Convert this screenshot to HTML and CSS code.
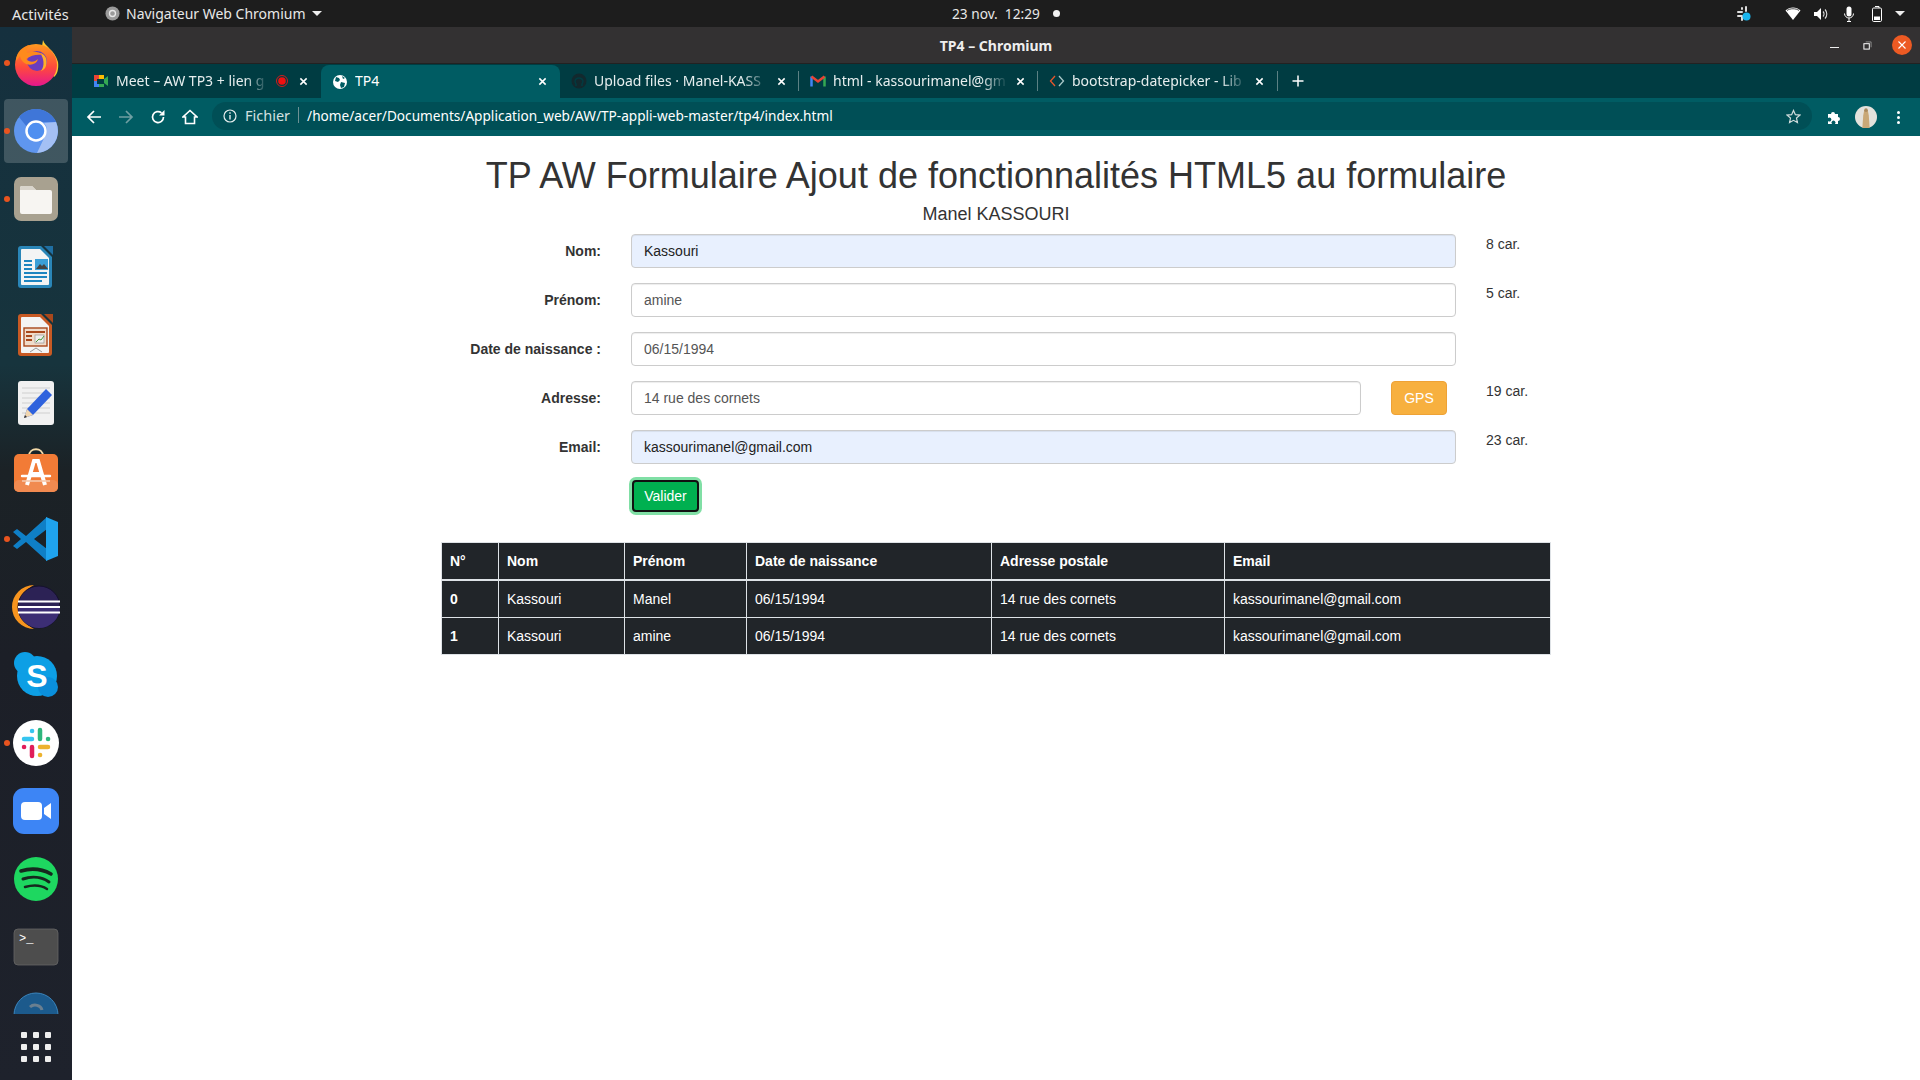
FILE: index.html
```html
<!DOCTYPE html>
<html lang="fr">
<head>
    <meta charset="UTF-8">
    <title>TP4</title>
    <link rel="stylesheet" href="styles.css">
</head>
<body>
    <!-- barre du haut -->
    <header class="topbar">
        <div class="top-left">
            <span class="activities">Activités</span>
            <span class="app-menu">
                <svg class="app-icon" viewBox="0 0 16 16"><circle cx="8" cy="8" r="7.5" fill="#9a9a9a"/><circle cx="8" cy="8" r="3.2" fill="none" stroke="#e8e8e8" stroke-width="1.4"/></svg>
                Navigateur Web Chromium
                <i class="caret"></i>
            </span>
        </div>
        <div class="clock">23 nov.&nbsp; 12:29<i class="clock-dot"></i></div>
        <div class="status">
            <svg class="st-slack" viewBox="0 0 16 16"><g stroke="#ddd" stroke-width="2" stroke-linecap="round"><path d="M2 6h4M6 2v1M10 1v4M2 10h4M6 10v4"/></g><circle cx="10.5" cy="10.5" r="4" fill="#19b5ee"/></svg>
            <svg class="st-wifi" viewBox="0 0 16 16"><path d="M0.5 4.5C4.5 0.5 11.5 0.5 15.5 4.5L8 14Z" fill="#fff"/><path d="M2 4.5C5 2.2 11 2.2 14 4.5" fill="none" stroke="#1d1d1d" stroke-width="0.8"/></svg>
            <svg class="st-vol" viewBox="0 0 16 16"><path d="M1 6h3l4-4v12l-4-4H1Z" fill="#fff"/><path d="M10 5.5a3.5 3.5 0 0 1 0 5M12 3.5a6.5 6.5 0 0 1 0 9" fill="none" stroke="#ddd" stroke-width="1.1"/></svg>
            <svg class="st-mic" viewBox="0 0 16 16"><rect x="5.5" y="0.5" width="5" height="10" rx="2.5" fill="#fff"/><path d="M3.5 7.5a4.5 4.5 0 0 0 9 0M8 12v3.5M6 15.5h4" fill="none" stroke="#fff" stroke-width="1"/></svg>
            <svg class="st-bat" viewBox="0 0 16 16"><path d="M6 0.5h4v1.5" fill="none" stroke="#fff"/><rect x="3.5" y="2" width="9" height="13.5" rx="1.2" fill="none" stroke="#fff"/><rect x="5" y="10.5" width="6" height="3.5" fill="#fff"/></svg>
            <i class="caret"></i>
        </div>
    </header>

    <div class="desktop">
        <!-- dock -->
        <nav class="dock">
            <div class="dock-list">
                <div class="dock-item running">
                    <svg viewBox="0 0 48 48"><defs><linearGradient id="ffBody" x1="0" y1="0" x2="0" y2="1"><stop offset="0" stop-color="#ff9a1f"/><stop offset=".55" stop-color="#ff4a3c"/><stop offset="1" stop-color="#e5178d"/></linearGradient></defs>
                        <path d="M31 1C33 8 43 11 46 23C47 30 45 36 42 38L28 20Z" fill="#ffc82e"/>
                        <circle cx="24" cy="26" r="21" fill="url(#ffBody)"/>
                        <circle cx="25" cy="22" r="10" fill="#6b3dbd"/>
                        <path d="M28 14C33 15 36 20 34 27C33 30 31 31 29 32C33 27 32 19 28 14Z" fill="#ffb028"/>
                        <path d="M4 22C4 13 11 7 18 6C14 10 14 13 16 14C20 12 27 12 31 16C25 15 19 16 14 20C18 24 23 23 26 20C24 28 10 28 8 17Z" fill="#ff8a1c"/>
                    </svg>
                </div>
                <div class="dock-item running active">
                    <svg viewBox="0 0 48 48"><circle cx="24" cy="24" r="22" fill="#5f96ef"/>
                        <path d="M7 10A22 22 0 0 1 44 15H24A10 10 0 0 0 15 20Z" fill="#3f76d8"/>
                        <path d="M44 15A22 22 0 0 1 25 46L33 29A10 10 0 0 0 32 16Z" fill="#a4c0f4"/>
                        <circle cx="24" cy="24" r="9.5" fill="#4f8ff0" stroke="#fff" stroke-width="2.5"/></svg>
                </div>
                <div class="dock-item running">
                    <svg viewBox="0 0 48 48"><rect x="2" y="2" width="44" height="44" rx="7" fill="#a8a190"/>
                        <path d="M8 13a2 2 0 0 1 2-2h10l4 4h14a2 2 0 0 1 2 2v20a2 2 0 0 1-2 2H10a2 2 0 0 1-2-2Z" fill="#f7f5f2"/>
                        <path d="M8 13a2 2 0 0 1 2-2h10l4 4H8Z" fill="#d9d5cc"/></svg>
                </div>
                <div class="dock-item">
                    <svg viewBox="0 0 48 48"><path d="M9 3h20l11 11v28a3 3 0 0 1-3 3H9a3 3 0 0 1-3-3V6a3 3 0 0 1 3-3Z" fill="#2a86b8"/>
                        <path d="M10 6h18l9 9v26a1 1 0 0 1-1 1H10a1 1 0 0 1-1-1V7a1 1 0 0 1 1-1Z" fill="#f4f4f4"/>
                        <path d="M32 3h9v9Z" fill="#1f6fa3"/>
                        <path d="M12 18h8M12 22h8M12 26h8M12 30h23M12 34h23M12 38h18" stroke="#1e85c0" stroke-width="2"/>
                        <rect x="23" y="16" width="13" height="11" fill="#3a9fd8"/><path d="M24 26l4-5 2 2 2-2 4 5Z" fill="#444"/></svg>
                </div>
                <div class="dock-item">
                    <svg viewBox="0 0 48 48"><path d="M9 3h20l11 11v28a3 3 0 0 1-3 3H9a3 3 0 0 1-3-3V6a3 3 0 0 1 3-3Z" fill="#c85a24"/>
                        <path d="M10 6h18l9 9v26a1 1 0 0 1-1 1H10a1 1 0 0 1-1-1V7a1 1 0 0 1 1-1Z" fill="#f4f4f4"/>
                        <path d="M32 3h9v9Z" fill="#a8481c"/>
                        <rect x="12" y="17" width="23" height="18" fill="#f0dccb" stroke="#a8481c" stroke-width="1.4"/>
                        <path d="M14 21h19M14 25h6M14 29h6" stroke="#a8481c" stroke-width="2"/>
                        <rect x="23" y="24" width="9" height="8" fill="#eee" stroke="#888" stroke-width=".6"/><path d="M24 31l3-3 2 1 3-4" fill="none" stroke="#4a9a3a"/>
                        <path d="M18 41l6-4 6 4" fill="none" stroke="#999"/></svg>
                </div>
                <div class="dock-item">
                    <svg viewBox="0 0 48 48"><rect x="6" y="2" width="36" height="44" rx="3" fill="#f1f1f1"/>
                        <path d="M10 9h28M10 14h28M10 19h28M10 24h28M10 29h28M10 34h28" stroke="#cfcfcf"/>
                        <path d="M34 10l6 6-19 20-9 3 3-9Z" fill="#2f62dd"/><path d="M15 30l6 6-9 3Z" fill="#f1d6b0"/><path d="M12 39l1-3 2 2Z" fill="#333"/></svg>
                </div>
                <div class="dock-item">
                    <svg viewBox="0 0 48 48"><path d="M17 9c0-9 14-9 14 0" fill="none" stroke="#f3d9a8" stroke-width="1.8"/>
                        <rect x="2" y="7" width="44" height="38" rx="5" fill="#f27b36"/><rect x="2" y="33" width="44" height="12" rx="5" fill="#f18a50"/>
                        <path d="M15 38L22 14h4l7 24M18 27h12" fill="none" stroke="#fff" stroke-width="4"/><path d="M10 29h28" stroke="#fff" stroke-width="2.4" stroke-linecap="round"/><path d="M10 34h28" stroke="#f7c6a8" stroke-width="1.6"/></svg>
                </div>
                <div class="dock-item running">
                    <svg viewBox="0 0 48 48"><path d="M35 2L14 21 5 14 1 17 9 24 1 31 5 34 14 27 35 46ZM35 14V34L22 24Z" fill="#0f7fc6" fill-rule="evenodd"/>
                        <path d="M34 2l12 5v34l-12 5Z" fill="#1fa3ee"/><path d="M34 14L22 24 34 34Z" fill="none"/></svg>
                </div>
                <div class="dock-item">
                    <svg viewBox="0 0 48 48"><path d="M22 2A22 22 0 0 0 22 46C14 42 8 34 8 24S14 6 22 2Z" fill="#f7941e"/>
                        <circle cx="27" cy="24" r="21" fill="#2c2255" stroke="#15102e"/>
                        <path d="M6 24a21 21 0 0 0 42 0Z" fill="#3c2e74"/>
                        <path d="M6 18.500h42M6 24h42M6 29.500h42" stroke="#fff" stroke-width="2.200"/></svg>
                </div>
                <div class="dock-item">
                    <svg viewBox="0 0 48 48"><circle cx="25" cy="25" r="20" fill="#0d9fe5"/><circle cx="13" cy="12" r="11" fill="#0d9fe5"/><circle cx="36" cy="36" r="10" fill="#0a8fdc"/>
                        <text class="skype-s" x="25" y="36" text-anchor="middle">S</text></svg>
                </div>
                <div class="dock-item running">
                    <svg viewBox="0 0 48 48"><circle cx="24" cy="24" r="23" fill="#fff"/>
                        <g fill="none" stroke-width="4.500" stroke-linecap="round"><path d="M12 20h8M20 12h.1" stroke="#36c5f0"/><path d="M28 11v9M36 20h.1" stroke="#2eb67d"/><path d="M28 28h8M28 36h.1" stroke="#ecb22e"/><path d="M20 28v9M12 28h.1" stroke="#e01e5a"/></g></svg>
                </div>
                <div class="dock-item">
                    <svg viewBox="0 0 48 48"><rect x="1" y="1" width="46" height="46" rx="11" fill="#3d85f5"/>
                        <rect x="9" y="15" width="21" height="18" rx="4" fill="#fff"/><path d="M32 21l7-5v16l-7-5Z" fill="#fff"/></svg>
                </div>
                <div class="dock-item">
                    <svg viewBox="0 0 48 48"><circle cx="24" cy="24" r="22" fill="#1ed760"/>
                        <g fill="none" stroke="#16281e" stroke-linecap="round"><path d="M9 16c10-3 21-2 30 3" stroke-width="3.600"/><path d="M11 24c9-3 19-2 26 3" stroke-width="3"/><path d="M13 32c7-2 16-2 22 2" stroke-width="2.500"/></g></svg>
                </div>
                <div class="dock-item">
                    <svg viewBox="0 0 48 48"><rect x="2" y="6" width="44" height="36" rx="4" fill="#4d4d4d" stroke="#666" stroke-width=".8"/>
                        <text class="term-text" x="7" y="19">&gt;_</text></svg>
                </div>
                <div class="dock-item">
                    <svg viewBox="0 0 48 48"><circle cx="24" cy="24" r="22" fill="#1c5a8c"/><path d="M2 24a22 22 0 0 1 44 0" fill="none" stroke="#3a85bd" stroke-width="1"/><path d="M18 16a7 6 0 0 1 12 3" fill="none" stroke="#6a7f90" stroke-width="3"/></svg>
                </div>
            </div>
            <div class="dock-grid">
                <i></i><i></i><i></i><i></i><i></i><i></i><i></i><i></i><i></i>
            </div>
        </nav>

        <div class="window">
            <div class="titlebar">
                <span class="win-title">TP4 – Chromium</span>
                <div class="win-btns">
                    <span class="win-min"></span>
                    <svg class="win-max" viewBox="0 0 10 10"><rect x="1" y="3" width="6" height="6" fill="none" stroke="#fff" stroke-width="1.100"/><path d="M3 1h6v6" fill="none" stroke="#aaa" stroke-width=".8"/></svg>
                    <span class="win-close"><svg viewBox="0 0 10 10"><path d="M1.500 1.500l7 7M8.500 1.500l-7 7" stroke="#fff" stroke-width="1.100"/></svg></span>
                </div>
            </div>

            <div class="tabstrip">
                <div class="tab">
                    <svg class="tab-icon" viewBox="0 0 16 16"><rect x="1" y="2" width="5" height="6" fill="#ea4335"/><rect x="6" y="2" width="5" height="4" fill="#fbbc04"/><rect x="1" y="8" width="5" height="6" fill="#4285f4"/><rect x="6" y="11" width="5" height="3" fill="#34a853"/><path d="M11 6l4-3v10l-4-3Z" fill="#34a853"/><rect x="4" y="6" width="6" height="5" fill="#003c42"/></svg>
                    <span class="tab-title">Meet – AW TP3 + lien g</span>
                    <svg class="tab-rec" viewBox="0 0 12 12"><circle cx="6" cy="6" r="5.500" fill="none" stroke="#e81a1a" stroke-width=".9"/><circle cx="6" cy="6" r="3.800" fill="#f01010"/></svg>
                    <svg class="tab-x" viewBox="0 0 10 10"><path d="M1.500 1.500l7 7M8.500 1.500l-7 7"/></svg>
                </div>
                <div class="tab tab-active">
                    <svg class="tab-icon" viewBox="0 0 16 16"><circle cx="8" cy="8" r="7" fill="#fff"/><path d="M4 3l3 1 1 2-2 2-3-1ZM9 8l4 1-1 4-3 1-1-3ZM10 2l3 2-2 1Z" fill="#005c63"/></svg>
                    <span class="tab-title">TP4</span>
                    <svg class="tab-x" viewBox="0 0 10 10"><path d="M1.500 1.500l7 7M8.500 1.500l-7 7"/></svg>
                </div>
                <div class="tab">
                    <svg class="tab-icon" viewBox="0 0 16 16"><circle cx="8" cy="8" r="7.500" fill="#1b1f23" opacity=".65"/><path d="M5 13v-2C3 9 4 5 8 5s5 4 3 6v2" fill="none" stroke="#003c42" stroke-width="1.500"/></svg>
                    <span class="tab-title">Upload files · Manel-KASS</span>
                    <svg class="tab-x" viewBox="0 0 10 10"><path d="M1.500 1.500l7 7M8.500 1.500l-7 7"/></svg>
                </div>
                <div class="tab tab-sep">
                    <svg class="tab-icon" viewBox="0 0 16 16"><path d="M1.500 3.500v10" stroke="#4285f4" stroke-width="2.500"/><path d="M14.500 3.500v10" stroke="#34a853" stroke-width="2.500"/><path d="M1.500 3.500L8 8.500l6.500-5" fill="none" stroke="#ea4335" stroke-width="2.500"/></svg>
                    <span class="tab-title">html - kassourimanel@gm</span>
                    <svg class="tab-x" viewBox="0 0 10 10"><path d="M1.500 1.500l7 7M8.500 1.500l-7 7"/></svg>
                </div>
                <div class="tab tab-sep">
                    <svg class="tab-icon" viewBox="0 0 16 16"><path d="M6 3L1.500 8 6 13" fill="none" stroke="#e9572b" stroke-width="1.300"/><path d="M10 3l4.500 5-4.500 5" fill="none" stroke="#a9c9c9" stroke-width="1.300"/></svg>
                    <span class="tab-title">bootstrap-datepicker - Lib</span>
                    <svg class="tab-x" viewBox="0 0 10 10"><path d="M1.500 1.500l7 7M8.500 1.500l-7 7"/></svg>
                </div>
                <div class="tab-new"><svg viewBox="0 0 12 12"><path d="M6 0.500v11M0.500 6h11" stroke="#fff" stroke-width="1.500"/></svg></div>
            </div>

            <div class="toolbar">
                <svg class="tb-btn" viewBox="0 0 16 16"><path d="M15 8H2M8 2L2 8l6 6" fill="none" stroke="#fff" stroke-width="1.700"/></svg>
                <svg class="tb-btn" viewBox="0 0 16 16"><path d="M1 8h13M8 2l6 6-6 6" fill="none" stroke="#6f9fa3" stroke-width="1.700"/></svg>
                <svg class="tb-btn" viewBox="0 0 16 16"><path d="M13.500 8A5.500 5.500 0 1 1 11.500 3.800" fill="none" stroke="#fff" stroke-width="1.700"/><path d="M14.500 1v5.500H9Z" fill="#fff"/></svg>
                <svg class="tb-btn" viewBox="0 0 16 16"><path d="M8 1.500L1 8h2.500v6.500h9V8H15Z" fill="none" stroke="#fff" stroke-width="1.600"/></svg>
                <div class="omnibox">
                    <svg class="omni-info" viewBox="0 0 14 14"><circle cx="7" cy="7" r="6" fill="none" stroke="#e6eeee" stroke-width="1.200"/><path d="M7 6v4.500M7 3.300v1.500" stroke="#e6eeee" stroke-width="1.400"/></svg>
                    <span class="omni-scheme">Fichier</span>
                    <span class="omni-url">/home/acer/Documents/Application_web/AW/TP-appli-web-master/tp4/index.html</span>
                    <svg class="omni-star" viewBox="0 0 16 16"><path d="M8 1.500l2 4.500 4.800.5-3.600 3.200 1 4.800L8 12.100l-4.200 2.400 1-4.800L1.200 6.500 6 6Z" fill="none" stroke="#cfdcdc" stroke-width="1.300"/></svg>
                </div>
                <svg class="tb-puzzle" viewBox="0 0 16 16"><path d="M2 5h3a2 2 0 1 1 4 0h3v3a2 2 0 1 1 0 4v3H9a2 2 0 1 0-3 0H2v-3a2 2 0 1 0 0-3Z" fill="#fff"/></svg>
                <svg class="tb-avatar" viewBox="0 0 24 24"><circle cx="12" cy="12" r="12" fill="#e4e2dc"/><path d="M10 5h4l1 5 1 14H8l1-14Z" fill="#c9a877"/><circle cx="12" cy="4.500" r="2" fill="#a98a5f"/></svg>
                <div class="tb-menu"><i></i><i></i><i></i></div>
            </div>

            <main class="page">
                <div class="container">
                    <h1 class="page-title">TP AW Formulaire Ajout de fonctionnalités HTML5 au formulaire</h1>
                    <p class="page-sub">Manel KASSOURI</p>

                    <form class="form">
                        <div class="form-row">
                            <label class="form-label">Nom:</label>
                            <div class="form-field"><input class="input input-auto" type="text" value="Kassouri"></div>
                            <span class="char-count">8 car.</span>
                        </div>
                        <div class="form-row">
                            <label class="form-label">Prénom:</label>
                            <div class="form-field"><input class="input" type="text" value="amine"></div>
                            <span class="char-count">5 car.</span>
                        </div>
                        <div class="form-row">
                            <label class="form-label">Date de naissance :</label>
                            <div class="form-field"><input class="input" type="text" value="06/15/1994"></div>
                            <span class="char-count"></span>
                        </div>
                        <div class="form-row">
                            <label class="form-label">Adresse:</label>
                            <div class="form-field field-gps">
                                <input class="input" type="text" value="14 rue des cornets">
                                <button class="btn-gps" type="button">GPS</button>
                            </div>
                            <span class="char-count">19 car.</span>
                        </div>
                        <div class="form-row">
                            <label class="form-label">Email:</label>
                            <div class="form-field"><input class="input input-auto" type="text" value="kassourimanel@gmail.com"></div>
                            <span class="char-count">23 car.</span>
                        </div>
                        <div class="form-row">
                            <span class="form-label"></span>
                            <div class="form-field"><button class="btn-valider" type="button">Valider</button></div>
                        </div>
                    </form>

                    <table class="table">
                        <thead>
                            <tr>
                                <th class="col-num">N°</th>
                                <th class="col-nom">Nom</th>
                                <th class="col-prenom">Prénom</th>
                                <th class="col-date">Date de naissance</th>
                                <th class="col-adr">Adresse postale</th>
                                <th>Email</th>
                            </tr>
                        </thead>
                        <tbody>
                            <tr>
                                <th>0</th>
                                <td>Kassouri</td>
                                <td>Manel</td>
                                <td>06/15/1994</td>
                                <td>14 rue des cornets</td>
                                <td>kassourimanel@gmail.com</td>
                            </tr>
                            <tr>
                                <th>1</th>
                                <td>Kassouri</td>
                                <td>amine</td>
                                <td>06/15/1994</td>
                                <td>14 rue des cornets</td>
                                <td>kassourimanel@gmail.com</td>
                            </tr>
                        </tbody>
                    </table>
                </div>
            </main>
        </div>
    </div>
</body>
</html>
```

FILE: styles.css
```css
*{
    box-sizing: border-box;
    padding: 0;
    margin: 0;
}
html,body{
    height: 100%;
    overflow: hidden;
}
body{
    display: flex;
    flex-direction: column;
    font-family: "Liberation Sans", Arial, sans-serif;
    font-size: 14px;
    color: #333;
    background-color: #fff;
}

/* barre du haut */
.topbar{
    height: 27px;
    flex: none;
    display: flex;
    align-items: center;
    background-color: #1d1d1d;
    color: #e8e8e8;
    font-family: "Noto Sans", sans-serif;
    font-size: 14px;
}
.top-left{
    width: 952px;
    display: flex;
    align-items: center;
    padding-left: 12px;
}
.activities{
    width: 93px;
    font-size: 14.500px;
}
.app-menu{
    display: flex;
    align-items: center;
}
.app-icon{
    width: 15px;
    height: 15px;
    margin-right: 6px;
}
.caret{
    display: inline-block;
    width: 0;
    height: 0;
    margin-left: 6px;
    border-left: 5px solid transparent;
    border-right: 5px solid transparent;
    border-top: 5px solid #eee;
}
.clock{
    display: flex;
    align-items: center;
    font-size: 13.700px;
}
.clock-dot{
    width: 7px;
    height: 7px;
    margin-left: 13px;
    border-radius: 50%;
    background-color: #f2f2f2;
}
.status{
    margin-left: auto;
    display: flex;
    align-items: center;
    padding-right: 15px;
}
.status svg{
    width: 16px;
    height: 16px;
}
.st-slack{
    margin-right: 33px;
}
.st-wifi,.st-vol,.st-mic{
    margin-right: 12px;
}
.st-bat{
    margin-right: 4px;
}

/* dock */
.desktop{
    flex: 1;
    display: flex;
    min-height: 0;
}
.dock{
    width: 72px;
    flex: none;
    display: flex;
    flex-direction: column;
    background: linear-gradient(#15303e 0%, #17343d 32%, #1b2226 42%, #1c1f27 60%, #1e222c 100%);
}
.dock-list{
    height: 987px;
    padding-top: 2px;
    overflow: hidden;
}
.dock-item{
    position: relative;
    height: 68px;
    display: flex;
    align-items: center;
    justify-content: center;
}
.dock-item svg{
    width: 48px;
    height: 48px;
}
.dock-item.active{
    margin: 2px 4px;
    border-radius: 4px;
    background-color: rgba(255,255,255,.18);
    height: 64px;
}
.dock-item.running::before{
    content: "";
    position: absolute;
    left: 4px;
    top: 31px;
    width: 6px;
    height: 6px;
    border-radius: 50%;
    background-color: #e9541f;
}
.dock-item.active::before{
    left: 0;
    top: 29px;
}
.skype-s{
    font-family: "Liberation Sans", sans-serif;
    font-weight: bold;
    font-size: 32px;
    fill: #fff;
}
.term-text{
    font-family: "Liberation Mono", monospace;
    font-size: 12px;
    fill: #fff;
}
.dock-grid{
    flex: 1;
    display: grid;
    grid-template-columns: repeat(3, 6px);
    grid-auto-rows: 6px;
    gap: 6px;
    justify-content: center;
    align-content: center;
}
.dock-grid i{
    background-color: #eee;
    border-radius: 1px;
}

/* fenetre */
.window{
    flex: 1;
    display: flex;
    flex-direction: column;
    min-width: 0;
}
.titlebar{
    position: relative;
    height: 37px;
    flex: none;
    display: flex;
    align-items: center;
    justify-content: center;
    padding-top: 1px;
    background-color: #333132;
    border-bottom: 1px solid #222;
}
.win-title{
    font-family: "Noto Sans", sans-serif;
    font-weight: bold;
    font-size: 14px;
    color: #eee;
}
.win-btns{
    position: absolute;
    right: 8px;
    top: 8px;
    display: flex;
    align-items: center;
}
.win-min{
    width: 9px;
    height: 1px;
    margin-top: 5px;
    margin-right: 24px;
    background-color: #eee;
}
.win-max{
    width: 9px;
    height: 9px;
    margin-right: 20px;
}
.win-close{
    width: 20px;
    height: 20px;
    padding: 5px;
    border-radius: 50%;
    background-color: #ed5a23;
}
.win-close svg{
    display: block;
}

/* onglets */
.tabstrip{
    height: 34px;
    flex: none;
    display: flex;
    padding-left: 10px;
    background-color: #003c42;
    color: #e6eeee;
    font-family: "Noto Sans", sans-serif;
    font-size: 14px;
}
.tab{
    position: relative;
    width: 239px;
    flex: none;
    display: flex;
    align-items: center;
    padding: 0 13px 0 11px;
}
.tab-active{
    margin-top: 1px;
    background-color: #005c63;
    border-radius: 8px 8px 0 0;
    color: #fff;
}
.tab-sep::before{
    content: "";
    position: absolute;
    left: -1px;
    top: 7px;
    bottom: 7px;
    width: 1px;
    background-color: #5c8184;
}
.tab-icon{
    width: 16px;
    height: 16px;
    flex: none;
    margin-right: 7px;
}
.tab-title{
    flex: 1;
    min-width: 0;
    padding-bottom: 2px;
    overflow: hidden;
    white-space: nowrap;
    -webkit-mask-image: linear-gradient(to right, #000 85%, transparent);
    mask-image: linear-gradient(to right, #000 85%, transparent);
}
.tab-active .tab-title{
    -webkit-mask-image: none;
    mask-image: none;
}
.tab-rec{
    width: 12px;
    height: 12px;
    flex: none;
    margin: 0 3px 0 8px;
}
.tab-x{
    width: 9px;
    height: 9px;
    flex: none;
    margin-left: 8px;
}
.tab-x path{
    stroke: #fff;
    stroke-width: 1.700;
}
.tab-new{
    width: 24px;
    margin-left: 0;
    border-left: 1px solid #5c8184;
    margin-top: 7px;
    margin-bottom: 7px;
    padding-left: 14px;
    display: flex;
    align-items: center;
    box-sizing: content-box;
}
.tab-new svg{
    width: 12px;
    height: 12px;
    flex: none;
}

/* barre d'adresse */
.toolbar{
    height: 38px;
    flex: none;
    display: flex;
    align-items: center;
    padding-left: 14px;
    background-color: #005c63;
}
.tb-btn{
    width: 16px;
    height: 16px;
    flex: none;
    margin-right: 16px;
}
.omnibox{
    width: 1600px;
    height: 28px;
    margin-left: -2px;
    margin-bottom: 2px;
    display: flex;
    align-items: center;
    padding: 0 8px 2px 11px;
    border-radius: 14px;
    background-color: #004f56;
    font-family: "Noto Sans", sans-serif;
    font-size: 13.630px;
    color: #fff;
}
.omni-info{
    width: 14px;
    height: 14px;
    flex: none;
    margin-right: 8px;
    margin-top: 2px;
}
.omni-scheme{
    padding-right: 8px;
    margin-right: 8px;
    border-right: 1px solid #6d9194;
    line-height: 16px;
    font-size: 14.500px;
    color: #d3e0e0;
}
.omni-url{
    flex: 1;
    white-space: nowrap;
}
.omni-star{
    width: 15px;
    height: 15px;
    flex: none;
    margin-right: 3px;
    margin-top: 2px;
}
.tb-puzzle{
    width: 16px;
    height: 16px;
    flex: none;
    margin-left: 14px;
}
.tb-avatar{
    width: 22px;
    height: 22px;
    flex: none;
    margin-left: 13px;
}
.tb-menu{
    margin-left: 20px;
    display: flex;
    flex-direction: column;
    gap: 2px;
}
.tb-menu i{
    width: 3px;
    height: 3px;
    border-radius: 50%;
    background-color: #fff;
}

/* contenu */
.page{
    flex: 1;
    background-color: #fff;
    overflow: hidden;
}
.container{
    width: 1110px;
    margin: 0 auto;
    padding-top: 20px;
}
.page-title{
    font-size: 36px;
    font-weight: normal;
    line-height: 40px;
    text-align: center;
    color: #333;
}
.page-sub{
    height: 38px;
    padding-top: 6px;
    font-size: 18px;
    line-height: 24px;
    text-align: center;
}
.form-row{
    display: flex;
    margin-bottom: 15px;
    min-height: 34px;
}
.form-label{
    width: 160px;
    flex: none;
    align-self: center;
    text-align: right;
    font-weight: bold;
}
.form-field{
    width: 825px;
    flex: none;
    margin-left: 30px;
    display: flex;
}
.field-gps{
    justify-content: space-between;
}
.field-gps .input{
    width: 730px;
}
.input{
    width: 100%;
    height: 34px;
    padding: 6px 12px;
    border: 1px solid #ccc;
    border-radius: 4px;
    background-color: #fff;
    box-shadow: inset 0 1px 1px rgba(0,0,0,.075);
    font-family: "Liberation Sans", Arial, sans-serif;
    font-size: 14px;
    color: #555;
}
.input-auto{
    background-color: #e8f0fe;
    color: #222;
}
.btn-gps{
    width: 56px;
    height: 34px;
    margin-right: 9px;
    border: 1px solid #eea236;
    border-radius: 4px;
    background-color: #f7b03f;
    font-family: "Liberation Sans", Arial, sans-serif;
    font-size: 14px;
    color: #fff;
}
.char-count{
    margin-left: 30px;
    line-height: 20px;
}
.btn-valider{
    width: 67px;
    height: 32px;
    margin: 1px 0 1px 1px;
    border: 2px solid #111;
    border-radius: 4px;
    background-color: #00b050;
    box-shadow: 0 0 0 3px #80dfa5;
    font-family: "Liberation Sans", Arial, sans-serif;
    font-size: 14px;
    color: #fff;
}
.table{
    width: 1110px;
    margin-top: 29px;
    border-collapse: collapse;
    table-layout: fixed;
    background-color: #212529;
    color: #fff;
    line-height: 21px;
}
.table th,.table td{
    padding: 7.500px 8px;
    border: 1px solid #dee2e6;
    text-align: left;
}
.table thead th{
    border-bottom-width: 2px;
}
.col-num{
    width: 57px;
}
.col-nom{
    width: 126px;
}
.col-prenom{
    width: 122px;
}
.col-date{
    width: 245px;
}
.col-adr{
    width: 233px;
}
```
